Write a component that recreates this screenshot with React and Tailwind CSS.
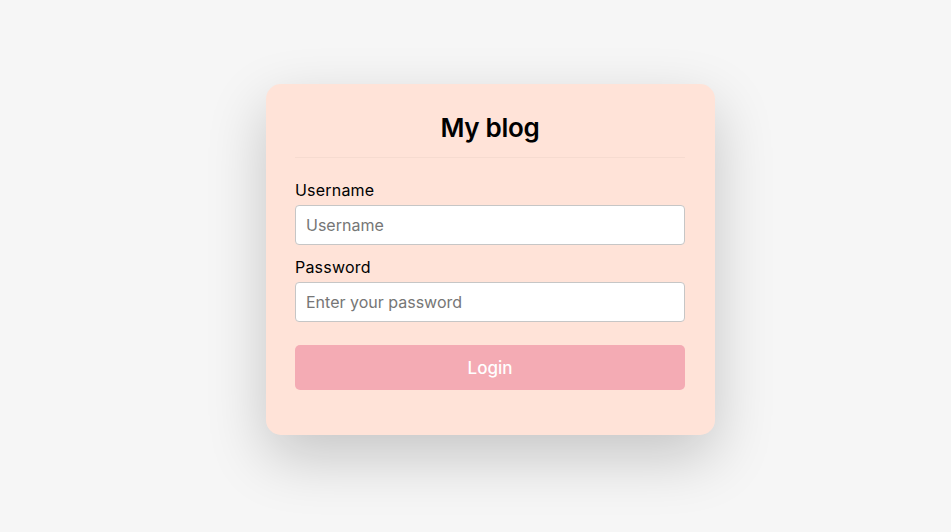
export default function App() {
    return (
        <div className="min-h-[532px] w-full bg-[#f6f6f6] flex items-center justify-center pb-[13px] pl-[30px]"
            style={{ fontFamily: "Inter, 'Noto Sans', sans-serif" }}>
            <div className="w-[449px] rounded-[15px] bg-[#ffe3d8] pl-[29px] pr-[30px] pt-[24px] pb-[45px]
                shadow-[0_22px_60px_rgba(0,0,0,0.2)]">
                {/* Title */}
                <h1 className="text-center text-[26px] leading-[39px] font-semibold text-black tracking-[-0.3px]">
                    My blog
                </h1>
                <div className="mt-[10px] border-t border-[#f6dbd0]" />

                <form className="flex flex-col mt-[20px]">
                    <label className="text-[16px] leading-[24px] text-black tracking-[0.2px]">Username</label>
                    <input
                        type="text"
                        placeholder="Username"
                        className="mt-[3px] h-[40px] w-full rounded-[4px] border border-[#c6c6c6] bg-white px-[10px]
                            text-[16px] text-black placeholder:text-[#767676] outline-none"
                    />

                    <label className="mt-[10px] text-[16px] leading-[24px] text-black tracking-[0.2px]">Password</label>
                    <input
                        type="password"
                        placeholder="Enter your password"
                        className="mt-[3px] h-[40px] w-full rounded-[4px] border border-[#c6c6c6] bg-white px-[10px]
                            text-[16px] text-black placeholder:text-[#767676] outline-none"
                    />

                    <button
                        type="button"
                        className="mt-[23px] h-[45px] w-full rounded-[5px] bg-[#f4abb4] text-[17px] font-medium text-white pt-[2px]"
                    >
                        Login
                    </button>
                </form>
            </div>
        </div>
    )
}
